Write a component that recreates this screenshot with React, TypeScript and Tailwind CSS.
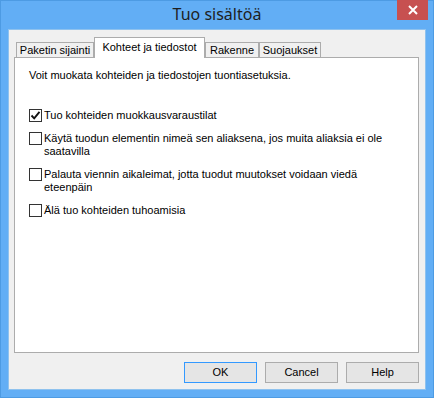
import React from 'react'

const tabs = [
  { label: 'Paketin sijainti', width: 'w-[78px]' },
  { label: 'Kohteet ja tiedostot', width: 'w-[111px]', active: true },
  { label: 'Rakenne', width: 'w-[54px]' },
  { label: 'Suojaukset', width: 'w-[62px]' },
]

const options = [
  { lines: ['Tuo kohteiden muokkausvaraustilat'], checked: true },
  { lines: ['Käytä tuodun elementin nimeä sen aliaksena, jos muita aliaksia ei ole', 'saatavilla'] },
  { lines: ['Palauta viennin aikaleimat, jotta tuodut muutokset voidaan viedä', 'eteenpäin'] },
  { lines: ['Älä tuo kohteiden tuhoamisia'] },
]

function CheckBox({ checked }: { checked?: boolean }) {
  return (
    <div className="flex h-[13px] w-[13px] shrink-0 items-center justify-center border border-[#333333] bg-white">
      {checked && (
        <svg width="11" height="11" viewBox="0 0 11 11">
          <path d="M1.5 5.5 L4.2 8.3 L9.5 1.8" fill="none" stroke="#111" strokeWidth="1.9" />
        </svg>
      )}
    </div>
  )
}

export default function App() {
  return (
    <div className="flex h-[398px] w-[434px] flex-col border border-[#4d9be3] bg-[#62aef5] font-['Liberation_Sans',Arial,sans-serif] text-[11px] text-black">
      {/* title bar */}
      <div className="grid h-[28px] grid-cols-[1fr_auto_1fr] items-start">
        <div />
        <div className="pt-[3px] font-['Noto_Sans',sans-serif] text-[16px] leading-[21px] text-[#1e1e1e]">
          Tuo sisältöä
        </div>
        <div className="flex justify-end pr-[5px]">
          <div className="-mt-[1px] flex h-[20px] w-[31px] items-center justify-center bg-[#c75050]">
            <svg width="10" height="10" viewBox="0 0 10 10">
              <path d="M1 1 L9 9 M9 1 L1 9" stroke="#fff" strokeWidth="2" />
            </svg>
          </div>
        </div>
      </div>

      {/* client area */}
      <div className="mx-[7px] mb-[7px] flex flex-1 flex-col border border-[#8fc2ee] bg-[#f0f0f0] pl-[5px] pr-[6px] pt-[7px]">
        <div className="relative z-10 flex items-end pl-[2px]">
          {tabs.map((t) =>
            t.active ? (
              <div
                key={t.label}
                className={`${t.width} -mb-[1px] flex h-[21px] items-start justify-center border border-b-0 border-[#acacac] bg-white pt-[2px] leading-[14px]`}
              >
                {t.label}
              </div>
            ) : (
              <div
                key={t.label}
                className={`${t.width} flex h-[15px] items-center justify-center border border-b-0 border-[#acacac] bg-[#f0f0f0] leading-[14px]`}
              >
                {t.label}
              </div>
            )
          )}
        </div>
        <div className="flex h-[296px] flex-col border border-[#acacac] bg-white pl-[14px] pt-[11px]">
          <div className="leading-[13px]">Voit muokata kohteiden ja tiedostojen tuontiasetuksia.</div>
          <div className="mt-[27px] flex flex-col gap-[10px]">
            {options.map((o) => (
              <div key={o.lines[0]} className="flex items-start gap-[2px]">
                <CheckBox checked={o.checked} />
                <div className="leading-[13px]">
                  {o.lines.map((l) => (
                    <div key={l}>{l}</div>
                  ))}
                </div>
              </div>
            ))}
          </div>
        </div>
        <div className="mt-[9px] flex justify-end gap-[8px]">
          <button className="h-[21px] w-[73px] border border-[#3399ff] bg-[#e5e5e5] leading-[19px]">OK</button>
          <button className="h-[21px] w-[73px] border border-[#acacac] bg-[#e5e5e5] leading-[19px]">Cancel</button>
          <button className="h-[21px] w-[73px] border border-[#acacac] bg-[#e5e5e5] leading-[19px]">Help</button>
        </div>
      </div>
    </div>
  )
}
